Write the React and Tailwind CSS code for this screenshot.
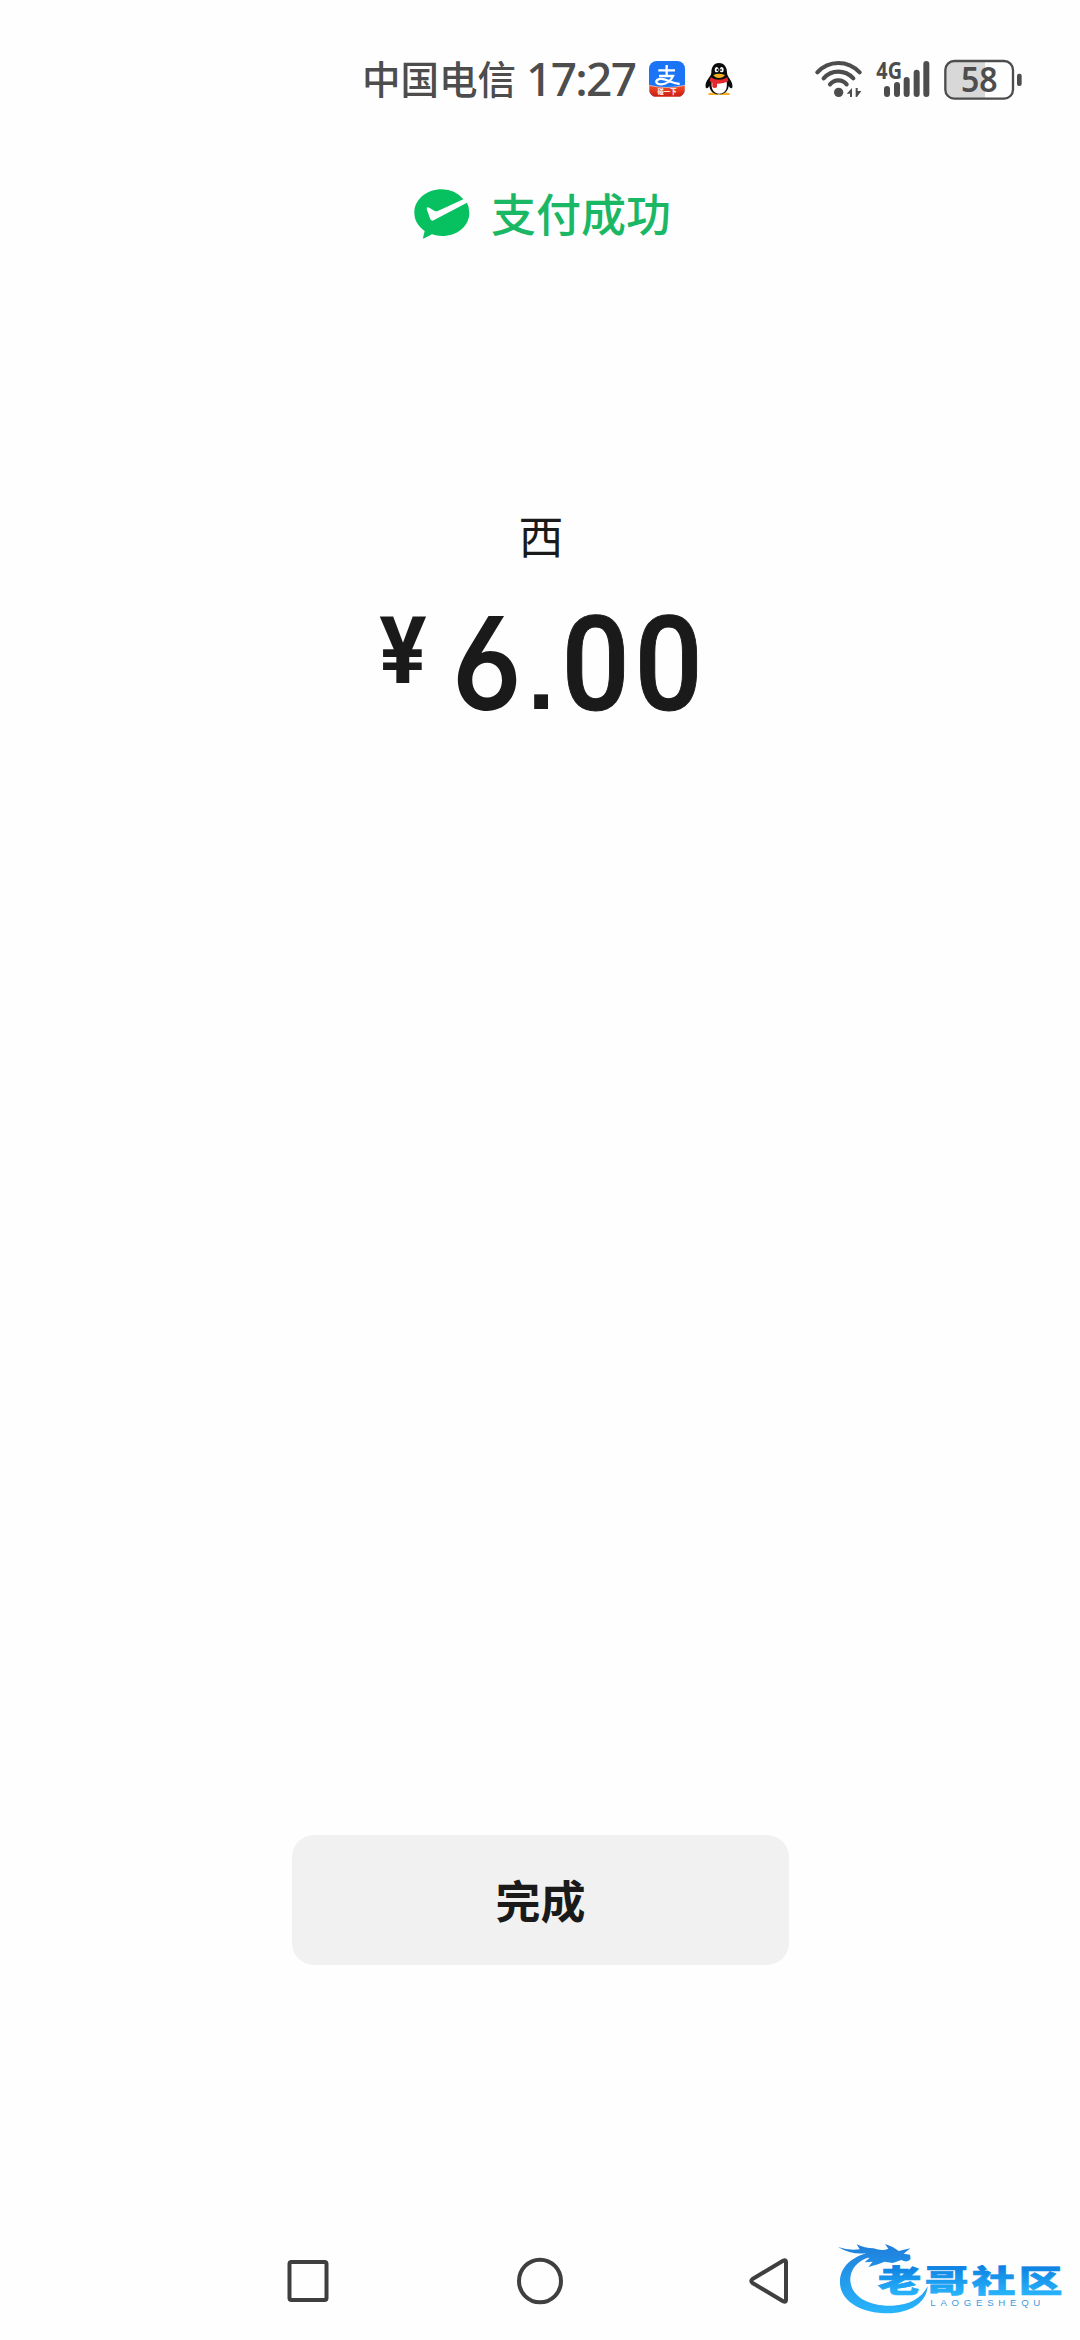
const CJK = "font-['Noto_Sans_CJK_SC',sans-serif]";

function AlipayIcon() {
  return (
    <svg className="h-9 w-9" viewBox="0 0 108 108">
      <defs>
        <linearGradient id="ali-ribbon" x1="0" x2="0" y1="0" y2="1">
          <stop offset="0" stopColor="#f4502f" />
          <stop offset="1" stopColor="#c91a10" />
        </linearGradient>
        <clipPath id="ali-clip">
          <rect width="108" height="108" rx="23" />
        </clipPath>
      </defs>
      <g clipPath="url(#ali-clip)">
        <rect width="108" height="108" fill="#1a74f5" />
        <g fill="none" stroke="#fff">
          <path d="M28 28H78M53 12V44" strokeWidth="7" />
          <path d="M30 45H72C66 59 52 70 36 70C22 70 19 62 25 57C32 51 48 55 60 60C74 66 82 68 92 69" strokeWidth="7" />
        </g>
        <path d="M0 73Q54 86 108 73V108H0Z" fill="url(#ali-ribbon)" stroke="#fbd9c9" strokeWidth="2" />
      </g>
      <text x="54" y="100" textAnchor="middle" fontSize="19" fontWeight="900" fill="#ffe9dc" fontFamily="Noto Sans CJK SC, sans-serif">
        碰一下
      </text>
    </svg>
  );
}

function QQIcon() {
  return (
    <svg className="h-[34px] w-7" viewBox="0 0 84 102">
      <path d="M11 94Q24 88 40 95V99H10ZM44 95Q60 88 74 94V99H44Z" fill="#f2b01e" />
      <path d="M42 3C25 3 19 17 19 32C19 40 10 47 5 58C0 68 1 78 5 79C8 80 11 74 13 72C15 88 26 97 42 97S69 88 71 72C73 74 76 80 80 79C84 77 83 66 78 57C73 47 66 40 66 32C66 17 59 3 42 3Z" fill="#0b0b0b" />
      <path d="M20 60H65Q69 94 43 95Q17 94 20 60Z" fill="#fff" />
      <ellipse cx="35" cy="23" rx="6" ry="8" fill="#fff" />
      <ellipse cx="50" cy="23" rx="6" ry="8" fill="#fff" />
      <ellipse cx="37" cy="24" rx="2.5" ry="4" fill="#111" />
      <ellipse cx="48" cy="24" rx="2.5" ry="3.5" fill="#111" />
      <path d="M25 39Q42 31 60 39Q54 48 42 48Q30 48 25 39Z" fill="#f5ae21" />
      <path d="M17 46Q42 61 67 46L70 58Q55 66 36 65V76Q27 80 22 75V62L14 57Z" fill="#e3272d" />
    </svg>
  );
}

function WifiIcon() {
  return (
    <svg className="h-10 w-[50px]" viewBox="39 57 150 120">
      <g fill="none" stroke="#4d4d4d" strokeWidth="12.5" strokeLinecap="round">
        <path d="M49 97Q75 69 112 69T176 97" />
        <path d="M68 115Q86 95 112 95T157 115" />
        <path d="M87 133Q97 121 112 121T137 133" />
      </g>
      <circle cx="113" cy="157" r="14" fill="#4d4d4d" />
      <path d="M137 161L153 144V171H147V161ZM164 144V171H168L181 153H170V144Z" fill="#4d4d4d" />
    </svg>
  );
}

function SignalIcon() {
  return (
    <svg className="h-10 w-[55px] overflow-visible" viewBox="225 57 165 120">
      <text x="226" y="116" fontSize="69" fontWeight="700" fill="#4d4d4d" fontFamily="Noto Sans, sans-serif" textLength="77" lengthAdjust="spacingAndGlyphs">
        4G
      </text>
      <g stroke="#4d4d4d" strokeWidth="18" strokeLinecap="round">
        <path d="M258 147V162M288 135V162M317 120V162M347 98V162M376 72V162" />
      </g>
    </svg>
  );
}

function BatteryIcon() {
  return (
    <svg className="h-[41px] w-[79px] overflow-visible" viewBox="429 54 237 123">
      <path d="M552 60H461Q433 60 433 88V144Q433 172 461 172H552Z" fill="#d8d8d8" />
      <rect x="433" y="60" width="203" height="113" rx="27" fill="none" stroke="#4d4d4d" strokeWidth="7" />
      <rect x="648" y="98" width="14" height="37" rx="6" fill="#4d4d4d" />
      <text x="535" y="153" textAnchor="middle" fontSize="101" fontWeight="600" fill="#4d4d4d" fontFamily="Noto Sans, sans-serif" textLength="110" lengthAdjust="spacingAndGlyphs">
        58
      </text>
    </svg>
  );
}

function StatusBar() {
  return (
    <div className="flex h-[158px] shrink-0 items-center pr-[57px] pl-[362px] text-[#4d4d4d]">
      <span className={`${CJK} pb-[3px] text-[38.5px] leading-none font-medium`}>中国电信</span>
      <span className="ml-[10px] pb-[2px] font-['Noto_Sans',sans-serif] text-[46px] leading-none font-medium tracking-[-1.7px]">17:27</span>
      <div className="ml-auto flex items-center">
        <AlipayIcon />
        <div className="ml-5 flex">
          <QQIcon />
        </div>
        <div className="ml-[81px] flex">
          <WifiIcon />
        </div>
        <div className="ml-3 flex">
          <SignalIcon />
        </div>
        <div className="ml-[13px] flex">
          <BatteryIcon />
        </div>
      </div>
    </div>
  );
}

function WeChatPayIcon() {
  return (
    <svg className="h-[50px] w-14" viewBox="42 56 168 150">
      <path d="M126 57C79 57 43 88 43 127C43 150 55 168 74 182L69 203Q69 206 73 204L96 192Q110 197 126 197C173 197 208 166 208 127Q208 110 201 97L101 150Q95 153 91 147L80 116Q80 108 88 112L104 122Q109 124 115 121L190 87Q165 57 126 57Z" fill="#07c160" />
    </svg>
  );
}

function Amount() {
  return (
    <div className="flex h-[96px] items-start font-['Roboto',sans-serif] text-[132px] leading-[96px] font-medium text-[#1a1a1a]">
      <span className="mt-[2px] flex w-[47px] justify-center text-[93px] leading-[65px] font-bold">
        <span className="inline-block scale-x-[0.95]">¥</span>
      </span>
      <span className="-mt-[2px] ml-[30px] flex w-[61px] justify-center">
        <span className="inline-block scale-x-[0.9] font-['Inter',sans-serif] text-[129px] font-semibold [font-feature-settings:'cv03','ss01']">6</span>
      </span>
      <span className="mt-[10px] ml-[17px] flex w-[14px] justify-center font-['Liberation_Sans',sans-serif] text-[98px] font-bold">.</span>
      <span className="ml-[19px] flex w-[57px] justify-center">
        <span className="inline-block scale-x-[0.91] [-webkit-text-stroke:1px_#1a1a1a]">0</span>
      </span>
      <span className="ml-4 flex w-[57px] justify-center">
        <span className="inline-block scale-x-[0.91] [-webkit-text-stroke:1px_#1a1a1a]">0</span>
      </span>
    </div>
  );
}

function NavBar() {
  return (
    <div className="flex h-[118px] shrink-0 items-center pl-[285px]">
      <svg className="h-12 w-12" viewBox="0 0 48 48" fill="none" stroke="#3f3f3f" strokeWidth="4">
        <rect x="4.5" y="5" width="37" height="38" rx="2" />
      </svg>
      <svg className="ml-[183px] h-12 w-12" viewBox="0 0 48 48" fill="none" stroke="#3f3f3f" strokeWidth="4">
        <ellipse cx="24" cy="24" rx="21" ry="21.3" />
      </svg>
      <svg className="ml-[182px] h-12 w-12" viewBox="0 0 48 48" fill="none" stroke="#3f3f3f" strokeWidth="4" strokeLinejoin="round">
        <path d="M37.5 3.5Q40 2.5 40 5V43Q40 45.5 37.5 44.5L6.5 26Q4 24 6.5 22Z" />
      </svg>
      <Watermark />
    </div>
  );
}

function Watermark() {
  return (
    <svg className="ml-[42px] h-[78px] w-[232px] shrink-0" viewBox="48 30 696 234">
      <defs>
        <linearGradient id="wm-blue" gradientUnits="userSpaceOnUse" x1="0" y1="-80" x2="0" y2="10">
          <stop offset="0" stopColor="#0d7fe0" />
          <stop offset="1" stopColor="#27b4fb" />
        </linearGradient>
        <linearGradient id="wm-dragon" gradientUnits="userSpaceOnUse" x1="0" y1="40" x2="0" y2="240">
          <stop offset="0" stopColor="#1f7fdb" />
          <stop offset="1" stopColor="#27b4fb" />
        </linearGradient>
      </defs>
      <g fill="url(#wm-dragon)">
        <path d="M142 63C86 78 58 112 60 154C62 207 122 244 203 244C270 244 319 213 323 163C304 200 268 219 218 221C146 224 94 193 91 147C89 114 111 86 150 75Z" />
        <path d="M54 45Q86 56 119 52L110 37Q135 49 160 49Q188 58 205 50L195 36Q220 44 236 57L271 49L251 65L270 68L272 81Q262 94 244 84L218 93L194 89L174 97L145 105L158 89L134 91L149 77L119 75L138 64Q94 69 54 45Z" />
      </g>
      <text transform="translate(173 179) scale(1.44 1)" fontSize="91" fontWeight="900" fill="url(#wm-blue)" stroke="url(#wm-blue)" strokeWidth="2" fontFamily="Noto Sans CJK SC, sans-serif" letterSpacing="7">
        老哥社区
      </text>
      <text x="331" y="222" fontSize="29" fill="#3d9be0" fontFamily="Liberation Sans, sans-serif" textLength="330">
        LAOGESHEQU
      </text>
    </svg>
  );
}

export default function App() {
  return (
    <div className="flex h-[2340px] w-[1080px] flex-col overflow-hidden bg-[#fefefe]">
      <StatusBar />
      <div className="mt-[30px] flex h-[52px] items-center pl-[414px]">
        <WeChatPayIcon />
        <span className={`${CJK} ml-[21px] pb-1 text-[45px] leading-none font-medium text-[#1ab765]`}>支付成功</span>
      </div>
      <div className={`${CJK} mt-[269px] flex h-[50px] items-center justify-center pl-[2px] text-[45px] leading-none text-[#1a1a1a]`}>西</div>
      <div className="mt-[58px] flex pl-[379px]">
        <Amount />
      </div>
      <div className="mt-auto flex justify-center pl-px">
        <button type="button" className={`${CJK} h-[130px] w-[497px] rounded-[22px] bg-[#f1f1f1] pb-[2px] text-[45px] leading-none font-bold text-[#1a1a1a]`}>
          完成
        </button>
      </div>
      <div className="h-[257px] shrink-0" />
      <NavBar />
    </div>
  );
}
